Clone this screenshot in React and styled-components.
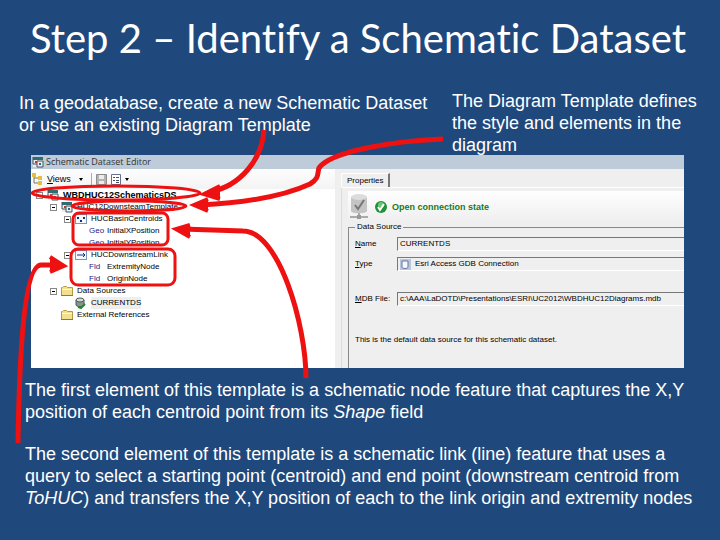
import React from "react";
import styled, { createGlobalStyle } from "styled-components";

const tree = [
	{ level: 0, box: true, icon: "dataset", text: "WBDHUC12SchematicsDS", bold: true },
	{ level: 1, box: true, icon: "dataset", text: "HUC12DownsteamTemplate" },
	{ level: 2, box: true, icon: "node", text: "HUCBasinCentroids" },
	{ level: 3, tag: "Geo", text: "InitialXPosition" },
	{ level: 3, tag: "Geo", text: "InitialYPosition" },
	{ level: 2, box: true, icon: "link", text: "HUCDownstreamLink" },
	{ level: 3, tag: "Fld", text: "ExtremityNode" },
	{ level: 3, tag: "Fld", text: "OriginNode" },
	{ level: 1, box: true, icon: "folder", text: "Data Sources" },
	{ level: 2, icon: "database", text: "CURRENTDS", selected: true },
	{ level: 1, icon: "folder", text: "External References" },
];

function DatasetIcon() {
	return (
		<svg width="12" height="12" viewBox="0 0 12 12">
			<rect x="1" y="1" width="10" height="3" fill="#2c6f73" />
			<rect x="1" y="4" width="10" height="7" fill="#e8eef2" />
			<path d="M1 1v7h4M5 5h6v6H5z" fill="none" stroke="#46555e" />
			<path d="M3 5h2v2H3z" fill="#c33" />
			<path d="M7 7h2v2H7z" fill="#2c6f73" />
		</svg>
	);
}

function NodeIcon({ link }) {
	return (
		<svg width="12" height="12" viewBox="0 0 12 12">
			<rect x="0.5" y="1.5" width="11" height="9" fill="#f4f8ff" stroke="#7d93b8" />
			{link ? (
				<path d="M2 6h8M8 4l2 2-2 2" fill="none" stroke="#14327c" />
			) : (
				<path d="M2 4h2v2H2zM8 4h2v2H8zM5 7h2v2H5z" fill="#14327c" />
			)}
		</svg>
	);
}

function FolderIcon() {
	return (
		<svg width="12" height="12" viewBox="0 0 12 12">
			<path d="M0.5 10.5v-8h1l1-1h3l1 1h5v8z" fill="#f3e08e" stroke="#b39a45" />
			<path d="M1 4.5h10" stroke="#fff8cf" />
			<path d="M0 10.5h12" stroke="#8f7a30" />
		</svg>
	);
}

function DatabaseIcon() {
	return (
		<svg width="12" height="12" viewBox="0 0 12 12">
			<path d="M1 3v5c0 2 8 2 8 0V3z" fill="#8b9590" stroke="#4d5752" />
			<ellipse cx="5" cy="3" rx="4" ry="2" fill="#d3d9d6" stroke="#4d5752" />
			<path d="M3 10l3 1 4-4" fill="none" stroke="#1f8b2f" strokeWidth="2" />
		</svg>
	);
}

function RowIcon({ name }) {
	if (name === "dataset") return <DatasetIcon />;
	if (name === "folder") return <FolderIcon />;
	if (name === "database") return <DatabaseIcon />;
	return <NodeIcon link={name === "link"} />;
}

function Toolbar() {
	return (
		<Tools>
			<svg width="11" height="12" viewBox="0 0 11 12">
				<path d="M2 3v7h5M2 5h4" fill="none" stroke="#777" />
				<path d="M0 0h4v4H0zM6 3h4v4H6zM6 8h4v4H6z" fill="#e2bf3c" />
			</svg>
			<ToolButton type="button" $wide>
				<span><u>V</u>iews</span>
				<Caret />
			</ToolButton>
			<Divider />
			<ToolButton type="button" aria-label="Save">
				<svg width="11" height="11" viewBox="0 0 11 11">
					<path d="M0.5 0.5h10v10h-10z" fill="#b4b4b4" stroke="#8c8c8c" />
					<path d="M3 1h5v4H3zM3 7h5v3H3z" fill="#ececec" />
				</svg>
			</ToolButton>
			<ToolButton type="button" aria-label="Options">
				<svg width="10" height="11" viewBox="0 0 10 11">
					<path d="M0.5 0.5h9v10h-9z" fill="#fff" stroke="#67728c" />
					<path d="M2 3h2v1H2zM2 6h2v1H2zM5 3h3v1H5zM5 6h3v1H5zM5 8h3v1H5z" fill="#44506e" />
				</svg>
				<Caret />
			</ToolButton>
		</Tools>
	);
}

function Tree() {
	return (
		<TreeList>
			{tree.map((row, i) => (
				<TreeRow key={i} $level={row.level}>
					<Expander $box={row.box}>{row.box && <i />}</Expander>
					{row.icon && <RowIcon name={row.icon} />}
					{row.tag && <Tag>{row.tag}</Tag>}
					<Label $bold={row.bold} $selected={row.selected}>{row.text}</Label>
				</TreeRow>
			))}
		</TreeList>
	);
}

function Properties() {
	return (
		<Panel>
			<Tab type="button">Properties</Tab>
			<Page>
				<Status>
					<svg width="20" height="25" viewBox="0 0 20 25">
						<path d="M1 3v14c0 3 16 3 16 0V3z" fill="#c4c4c4" />
						<ellipse cx="9" cy="3" rx="8" ry="3" fill="#dcdcdc" />
						<path d="M5 11l3 4 6-9" fill="none" stroke="#777" strokeWidth="2" />
						<path d="M9 19v3M0 23h18" stroke="#aaa" strokeWidth="2" />
						<path d="M7 21h4v4H7z" fill="#999" />
					</svg>
					<svg width="12" height="12" viewBox="0 0 12 12">
						<circle cx="6" cy="6" r="6" fill="#1f9138" />
						<circle cx="6" cy="4" r="3" fill="#6bc774" />
						<path d="M3 6l2 3 4-6" fill="none" stroke="#fff" strokeWidth="2" />
					</svg>
					<b>Open connection state</b>
				</Status>
				<Group>
					<legend>Data Source</legend>
					<Field>
						<label htmlFor="name"><u>N</u>ame</label>
						<Box><input id="name" defaultValue="CURRENTDS" /></Box>
					</Field>
					<Field>
						<label htmlFor="type"><u>T</u>ype</label>
						<Box>
							<svg width="11" height="11" viewBox="0 0 11 11">
								<path d="M0 0h11v11H0z" fill="#b9c7dc" />
								<path d="M2 2v6c0 2 6 2 6 0V2z" fill="#f4f8ff" stroke="#6479a0" />
							</svg>
							<input id="type" defaultValue="Esri Access GDB Connection" />
						</Box>
					</Field>
					<Field $last>
						<label htmlFor="mdb"><u>M</u>DB File:</label>
						<Box><input id="mdb" defaultValue="c:\AAA\LaDOTD\Presentations\ESRI\UC2012\WBDHUC12Diagrams.mdb" /></Box>
					</Field>
					<Note>This is the default data source for this schematic dataset.</Note>
				</Group>
			</Page>
		</Panel>
	);
}

// red pen marks drawn over the slide
function Annotations() {
	return (
		<Ink viewBox="0 0 720 540" aria-hidden="true">
			<ellipse cx="116" cy="193" rx="84" ry="7" />
			<ellipse cx="129" cy="206" rx="57" ry="5" />
			<rect x="73" y="213" width="95" height="32" rx="6" />
			<rect x="71" y="249" width="104" height="36" rx="7" />
			<g className="lines">
				<path d="M264 130C262 160 240 186 210 192" />
				<path d="M443 139C390 141 330 152 319 168C317 173 320 178 310 184C280 198 240 203 200 205" />
				<path d="M306 378C306 325 279 231 243 231L182 229" />
				<path d="M18 443C19 380 22 265 41 265H58" />
			</g>
			<g className="heads">
				<path d="M220 186L204 194L220 199" />
				<path d="M208 199L194 205L208 211" />
				<path d="M190 225L176 229L190 237" />
				<path d="M50 257L64 266L50 272" />
			</g>
		</Ink>
	);
}

function App() {
	return (
		<Slide>
			<GlobalStyle />
			<Title>Step 2 – Identify a Schematic Dataset</Title>
			<Intro>
				<p>In a geodatabase, create a new Schematic Dataset<br />or use an existing Diagram Template</p>
				<p>The Diagram Template defines<br />the style and elements in the<br />diagram</p>
			</Intro>
			<Editor>
				<EditorTitle><DatasetIcon />Schematic Dataset Editor</EditorTitle>
				<Body>
					<Side>
						<Toolbar />
						<Tree />
					</Side>
					<Properties />
				</Body>
			</Editor>
			<Notes>
				<p>The first element of this template is a schematic node feature that captures the X,Y<br />position of each centroid point from its <em>Shape</em> field</p>
				<p>The second element of this template is a schematic link (line) feature that uses a<br />query to select a starting point (centroid) and end point (downstream centroid from<br /><em>ToHUC</em>) and transfers the X,Y position of each to the link origin and extremity nodes</p>
			</Notes>
			<Annotations />
		</Slide>
	);
}

const GlobalStyle = createGlobalStyle`
	* { box-sizing: border-box; }
	body { margin: 0; background: #1f497d; }
	p, h1, ul { margin: 0; padding: 0; }
`;

const Slide = styled.main`
	position: relative;
	min-height: 100vh;
	color: #fff;
	font-family: "Liberation Sans", Arial, sans-serif;
	font-size: 18px;
	line-height: 22px;
`;

const Title = styled.h1`
	padding: 12px 24px 0 20px;
	font: 400 40px/52px Lato, Calibri, sans-serif;
	font-variant-ligatures: none;
	text-align: center;
	white-space: nowrap;
`;

const Intro = styled.div`
	display: grid;
	grid-template-columns: 433fr 268fr;
	padding: 26px 0 0 19px;
	height: 91px;
	white-space: nowrap;

	p:first-child { padding-top: 2px; }
`;

const Editor = styled.section`
	margin: 0 36px 0 31px;
	background: #fff;
	color: #000;
	font-size: 8px;
	line-height: 12px;
`;

const EditorTitle = styled.header`
	display: flex;
	align-items: center;
	gap: 2px;
	padding-left: 1px;
	height: 14px;
	background: #becbd9;
	color: #333;
	font: 9px/14px "Open Sans", sans-serif;
`;

const Body = styled.div`
	display: grid;
	grid-template-columns: 305fr 348fr;
	height: 199px;
`;

const Side = styled.div`
	border-right: 1px solid #eee;
`;

const Tools = styled.div`
	display: flex;
	align-items: center;
	gap: 4px;
	padding-left: 1px;
	height: 20px;
	background: linear-gradient(#fdfdfd, #f3f3f3);
`;

const ToolButton = styled.button`
	display: flex;
	align-items: center;
	gap: ${(p) => (p.$wide ? 8 : 4)}px;
	padding: 0 ${(p) => (p.$wide ? 4 : 0)}px 0 0;
	border: 0;
	background: none;
	font: 9px/12px "Liberation Sans", sans-serif;
`;

const Caret = styled.span`
	border: 2px solid transparent;
	border-top: 3px solid #000;
	border-bottom: 0;
`;

const Divider = styled.span`
	width: 1px;
	height: 12px;
	background: #aaa;
`;

const TreeList = styled.ul`
	list-style: none;
`;

const TreeRow = styled.li`
	display: flex;
	align-items: center;
	gap: 4px;
	height: 12px;
	padding-left: ${(p) => 5 + p.$level * 14}px;
	white-space: nowrap;
`;

const Expander = styled.span`
	display: flex;
	align-items: center;
	justify-content: center;
	width: 7px;
	height: 7px;
	border: ${(p) => (p.$box ? "1px solid #888" : 0)};

	i { width: 3px; height: 1px; background: #000; }
`;

const Tag = styled.span`
	width: 14px;
	color: #22228c;
`;

const Label = styled.span`
	font-size: ${(p) => (p.$bold ? 9 : 8)}px;
	font-weight: ${(p) => (p.$bold ? 700 : 400)};
	background: ${(p) => (p.$selected ? "#eee" : "none")};
`;

const Panel = styled.div`
	display: flex;
	flex-direction: column;
	padding: 4px 0 0 5px;
	background: #efefef;
`;

const Tab = styled.button`
	align-self: flex-start;
	height: 14px;
	padding: 0 5px;
	border: 1px solid #fff;
	border-right: 2px solid #777;
	border-bottom: 0;
	background: #efefef;
	font: 8px/12px "Liberation Sans", sans-serif;
`;

const Page = styled.div`
	flex: 1;
	display: flex;
	flex-direction: column;
	padding: 3px 0 0 6px;
	border-top: 1px solid #fff;
	border-left: 1px solid #ddd;
`;

const Status = styled.div`
	display: flex;
	align-items: center;
	gap: 5px;
	height: 31px;
	padding-left: 2px;
	background: linear-gradient(#fefefe, #efefef);
	color: #187a18;
	font-size: 9px;
`;

const Group = styled.fieldset`
	flex: 1;
	min-width: 0;
	margin: 0;
	padding: 2px 0 0 6px;
	border: 1px solid #888;
	border-width: 1px 0 0 1px;

	legend { padding: 0 2px; line-height: 10px; }
`;

const Field = styled.div`
	display: grid;
	grid-template-columns: 42px 1fr;
	align-items: center;
	margin-top: ${(p) => (p.$last ? 15 : 0)}px;
	height: 20px;
`;

const Box = styled.div`
	display: flex;
	align-items: center;
	gap: 4px;
	height: 14px;
	padding-left: 2px;
	border: 1px solid #777;
	border-right: 0;
	border-bottom-color: #fff;

	input {
		flex: 1;
		min-width: 0;
		padding: 0;
		border: 0;
		background: none;
		font: 8px/12px "Liberation Sans", sans-serif;
	}
`;

const Note = styled.p`
	padding-top: 25px;
`;

const Notes = styled.div`
	padding: 11px 0 0 25px;
	white-space: nowrap;

	p + p { margin-top: 20px; }
`;

const Ink = styled.svg`
	position: absolute;
	top: 0;
	left: 0;
	width: 100%;
	fill: none;
	stroke: #ee1111;
	stroke-width: 3px;
	pointer-events: none;

	.lines { stroke-width: 5px; }
	.heads { fill: #ee1111; stroke-width: 4px; }
`;

export default App;
